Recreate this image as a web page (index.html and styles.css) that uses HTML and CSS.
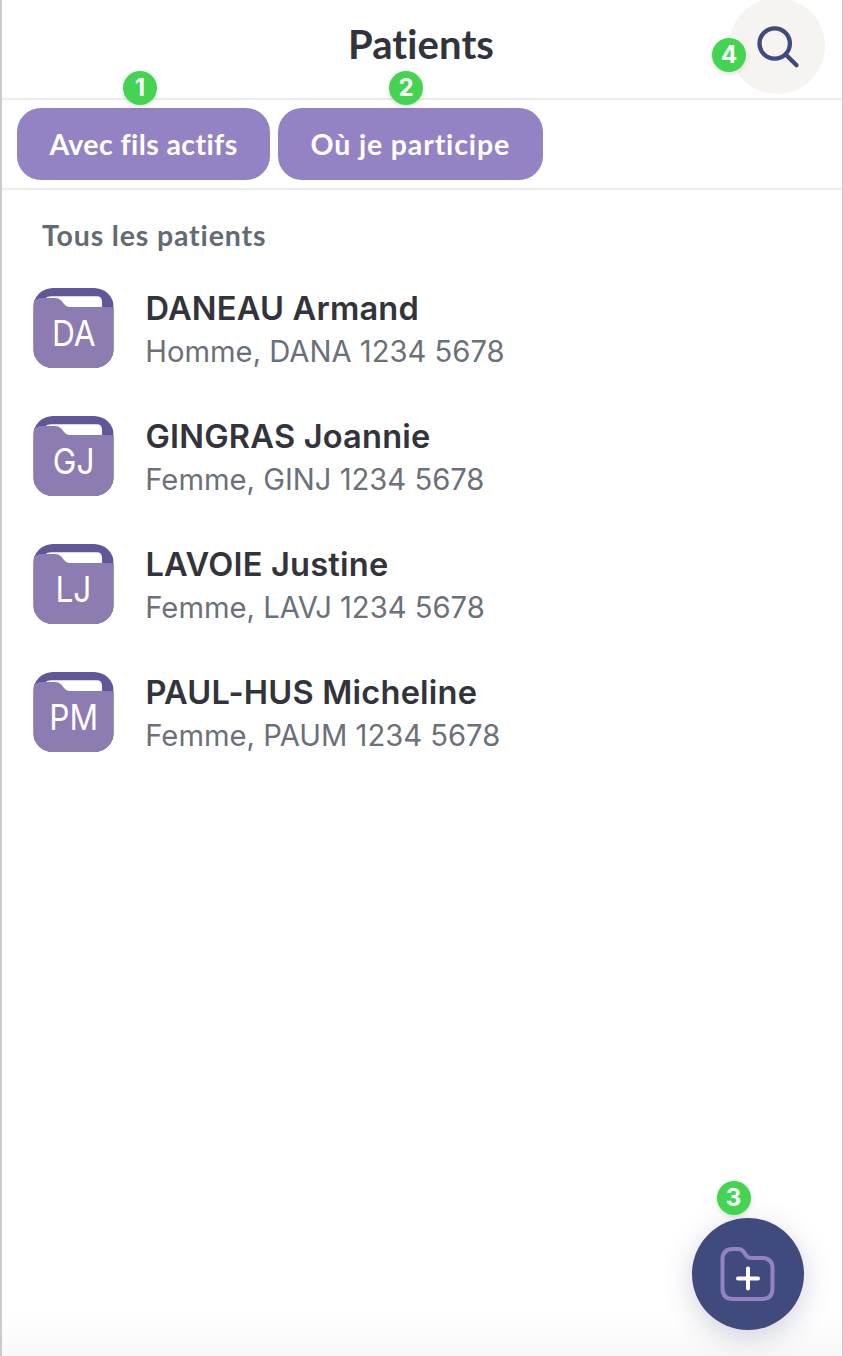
FILE: index.html
```html
<!DOCTYPE html>
<html lang="fr">
<head>
<meta charset="utf-8">
<title>Patients</title>
<link rel="stylesheet" href="styles.css">
</head>
<body>
<svg class="symbols" aria-hidden="true">
  <symbol id="folder" viewBox="0 0 80 80">
    <rect width="80" height="80" fill="#615799"/>
    <path d="M12 10Q14 8.300 18 8.300H63.500Q68.500 8.300 68.500 14V26H12Z" fill="#fff"/>
    <path d="M0 14Q3 10 9 10H20C25 10 26.500 11 29 14C31.500 17.500 33 19 37 19H77Q79 19 80 20V80H0Z" fill="#8d7cb2"/>
  </symbol>
</svg>
<main class="screen">
  <header class="header">
    <h1 class="title">Patients</h1>
    <button class="search" aria-label="Rechercher">
      <svg class="search-icon" width="48" height="48" viewBox="0 0 48 48" fill="none" stroke="#414a7d" stroke-width="4.300" stroke-linecap="round"><circle cx="20.700" cy="20.500" r="15.200"/><path d="M31.700 31.500L42.500 42.300"/></svg>
      <span class="badge badge-search">4</span>
    </button>
  </header>
  <nav class="filters">
    <button class="chip chip-active"><span class="chip-label label-active">Avec fils actifs</span><span class="badge badge-active">1</span></button>
    <button class="chip chip-mine"><span class="chip-label label-mine">Où je participe</span><span class="badge badge-mine">2</span></button>
  </nav>
  <h2 class="section">Tous les patients</h2>
  <ul class="list">
    <li class="patient"><div class="avatar"><svg class="folder" width="80" height="80"><use href="#folder"/></svg><span class="initials">DA</span></div><div class="info"><span class="name">DANEAU Armand</span><span class="detail">Homme, DANA 1234 5678</span></div></li>
    <li class="patient"><div class="avatar"><svg class="folder" width="80" height="80"><use href="#folder"/></svg><span class="initials">GJ</span></div><div class="info"><span class="name">GINGRAS Joannie</span><span class="detail">Femme, GINJ 1234 5678</span></div></li>
    <li class="patient"><div class="avatar"><svg class="folder" width="80" height="80"><use href="#folder"/></svg><span class="initials">LJ</span></div><div class="info"><span class="name">LAVOIE Justine</span><span class="detail">Femme, LAVJ 1234 5678</span></div></li>
    <li class="patient"><div class="avatar"><svg class="folder" width="80" height="80"><use href="#folder"/></svg><span class="initials">PM</span></div><div class="info"><span class="name">PAUL-HUS Micheline</span><span class="detail">Femme, PAUM 1234 5678</span></div></li>
  </ul>
  <button class="fab" aria-label="Ajouter un patient">
    <svg class="fab-icon" width="56" height="56" viewBox="0 0 56 56" fill="none" stroke-linecap="round" stroke-linejoin="round"><path d="M13 3H18.500C24 3 24 7.500 27 10.500C29 12.300 31 12 34 12H42Q52.500 12 52.500 22.500V42.500Q52.500 53 42 53H13Q2.500 53 2.500 42.500V13.500Q2.500 3 13 3Z" stroke="#9483c4" stroke-width="4"/><path d="M28 22.500V42.500M18 32.500H38" stroke="#fff" stroke-width="4"/></svg>
    <span class="badge badge-fab">3</span>
  </button>
</main>
</body>
</html>
```
FILE: styles.css
```css
* { box-sizing: border-box; }
body { margin: 0; background: #fff; font-family: Inter, sans-serif; }
button { border: 0; padding: 0; font: inherit; }
.symbols { position: absolute; width: 0; height: 0; }
.screen { position: relative; width: 843px; height: 1356px; overflow: hidden; border-left: 2px solid #cbcad0; border-right: 1px solid #cbcad0; background: linear-gradient(#fff 1315px, #f8f8f8 1356px); }
.header { position: relative; display: flex; align-items: center; justify-content: center; height: 100px; padding-bottom: 10px; border-bottom: 2px solid #ececec; }
.title { margin: 0; padding-right: 2px; font: 700 40px/48px Lato, sans-serif; color: #33343b; letter-spacing: .1px; font-variant-ligatures: none; }
.search { position: absolute; right: 17px; top: -2px; width: 96px; height: 96px; border-radius: 50%; background: #f6f4f1; }
.search-icon { display: block; margin: 2px 0 0 25px; }
.filters { display: flex; gap: 8px; height: 90px; padding: 8px 15px; border-bottom: 2px solid #ececec; }
.chip { position: relative; display: flex; align-items: center; justify-content: center; height: 72px; border-radius: 24px; background: #9483c4; color: #fff; font: 700 28.5px/36px Lato, sans-serif; }
.chip-active { width: 253px; }
.chip-mine { width: 264.5px; }
.chip-label { white-space: nowrap; font-variant-ligatures: none; }
.label-active { letter-spacing: .4px; }
.label-mine { letter-spacing: .85px; }
.badge { position: absolute; display: flex; align-items: center; justify-content: center; width: 34px; height: 34px; border-radius: 50%; background: #43d551; color: #fff; font: 700 24px/34px Inter, sans-serif; box-shadow: 0 2px 5px rgba(0,0,0,.13); }
.badge-active { left: 106px; top: -37px; }
.badge-mine { left: 111px; top: -37px; }
.badge-search { left: -17px; top: 40px; }
.badge-fab { left: 25px; top: -37.5px; }
.section { margin: 0; padding: 27px 40px 0; height: 82px; font: 700 28.5px/36px Lato, sans-serif; color: #636a72; letter-spacing: .85px; font-variant-ligatures: none; }
.list { display: flex; flex-direction: column; margin: 0; padding: 0; list-style: none; }
.patient { display: flex; gap: 31px; height: 128px; padding: 16px 31px; }
.avatar { position: relative; display: grid; width: 81px; height: 80px; border-radius: 20px; overflow: hidden; flex: none; }
.folder { grid-area: 1 / 1; width: 81px; }
.initials { grid-area: 1 / 1; z-index: 1; align-self: start; justify-self: center; margin-top: 24px; color: #fff; font-size: 36px; line-height: 42px; transform: scaleX(.88); }
.info { display: flex; flex-direction: column; align-items: flex-start; }
.name { padding-left: .5px; font-weight: 600; font-size: 32.6px; line-height: 40px; letter-spacing: .2px; color: #33343b; white-space: nowrap; }
.detail { margin-top: 4px; padding-left: .3px; font-size: 29.2px; line-height: 40px; color: #6b7079; white-space: nowrap; }
.fab { position: absolute; left: 689.5px; top: 1218px; width: 112px; height: 112px; border-radius: 50%; background: #414a7d; box-shadow: 0 8px 30px rgba(65,74,125,.24); }
.fab-icon { display: block; margin: 0 auto; }
```
